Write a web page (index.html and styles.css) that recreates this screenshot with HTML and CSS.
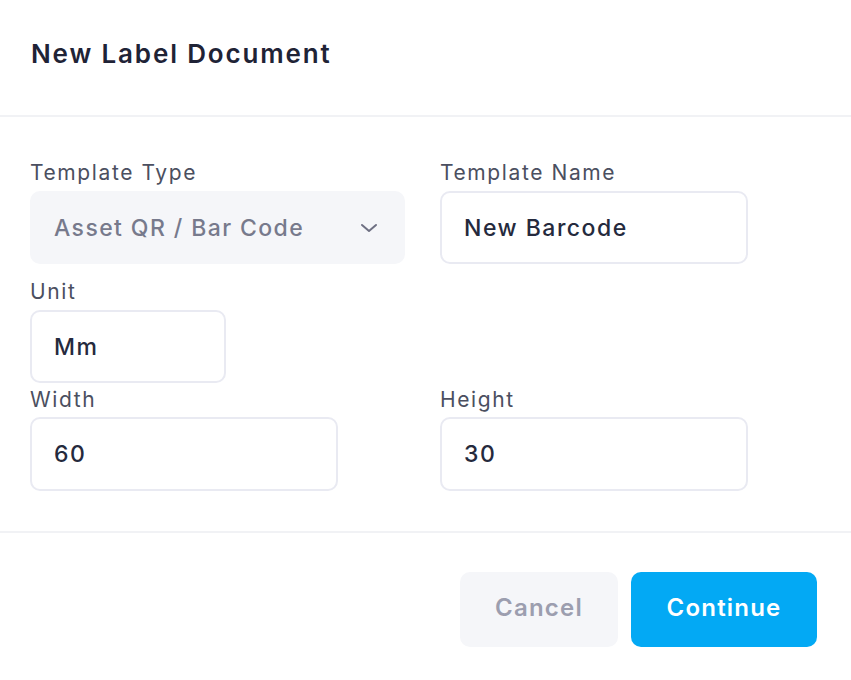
FILE: index.html
```html
<!DOCTYPE html>
<html>
<head>
<meta charset="utf-8">
<link rel="stylesheet" href="styles.css">
</head>
<body>
<div class="dialog">
  <header class="head">
    <h1 class="title">New Label Document</h1>
  </header>
  <section class="form">
    <div class="row row-first">
      <div class="field">
        <label class="label">Template Type</label>
        <div class="select">
          <span>Asset QR / Bar Code</span>
          <svg class="chev" width="18" height="10" viewBox="0 0 18 10"><path d="M2 2 L9 8 L16 2" fill="none" stroke="#6e7083" stroke-width="2" stroke-linecap="round" stroke-linejoin="round"/></svg>
        </div>
      </div>
      <div class="field">
        <label class="label">Template Name</label>
        <div class="input">New Barcode</div>
      </div>
    </div>
    <div class="row row-unit">
      <div class="field">
        <label class="label">Unit</label>
        <div class="input input-small">Mm</div>
      </div>
    </div>
    <div class="row row-size">
      <div class="field">
        <label class="label">Width</label>
        <div class="input">60</div>
      </div>
      <div class="field">
        <label class="label">Height</label>
        <div class="input">30</div>
      </div>
    </div>
  </section>
  <footer class="foot">
    <button class="btn btn-cancel">Cancel</button>
    <button class="btn btn-continue">Continue</button>
  </footer>
</div>
</body>
</html>
```

FILE: styles.css
```css
* { box-sizing: border-box; }
html, body { margin: 0; padding: 0; background: #ffffff; }
body {
  font-family: "Inter", "Open Sans", sans-serif;
  color: #22263a;
}
.dialog { width: 851px; height: 680px; }
.head {
  height: 117px;
  padding: 38px 0 0 31px;
  border-bottom: 2px solid #f1f2f5;
}
.title {
  margin: 0;
  font-size: 26px;
  line-height: 32px;
  font-weight: 600;
  color: #1f2336;
  letter-spacing: 1.85px;
}
.form {
  padding: 44px 0 40px 30px;
  border-bottom: 2px solid #f1f2f5;
}
.row {
  display: grid;
  grid-template-columns: 410px 410px;
}
.row-unit { margin-top: 16px; }
.row-size { margin-top: 5px; }
.field { display: flex; flex-direction: column; }
.label {
  font-size: 21px;
  line-height: 24px;
  color: #4b4f60;
  letter-spacing: 1.6px;
  margin-bottom: 6px;
}
.row-size .label { margin-bottom: 5px; }
.select {
  width: 375px;
  height: 73px;
  border-radius: 10px;
  background: #f5f6f9;
  display: flex;
  align-items: center;
  justify-content: space-between;
  padding: 0 27px 0 24px;
  font-size: 23px;
  font-weight: 500;
  letter-spacing: 1.4px;
  color: #777a8c;
}
.chev { display: block; }
.input {
  width: 308px;
  height: 73px;
  border: 2px solid #e9eaf2;
  border-radius: 10px;
  display: flex;
  align-items: center;
  padding: 0 22px;
  font-size: 23px;
  font-weight: 500;
  letter-spacing: 1.5px;
  color: #252a3d;
}
.row-size .input { height: 74px; }
.input-small { width: 196px; }
.foot {
  display: flex;
  justify-content: flex-end;
  gap: 13px;
  padding: 39px 34px 0 0;
}
.btn {
  height: 75px;
  border: none;
  border-radius: 10px;
  padding: 0 0 4px 0;
  font-family: inherit;
  font-size: 24px;
  font-weight: 600;
  letter-spacing: 1.2px;
}
.btn-cancel {
  width: 158px;
  background: #f5f6f9;
  color: #9c9eaf;
}
.btn-continue {
  width: 186px;
  background: #03a9f4;
  color: #ffffff;
}
```
